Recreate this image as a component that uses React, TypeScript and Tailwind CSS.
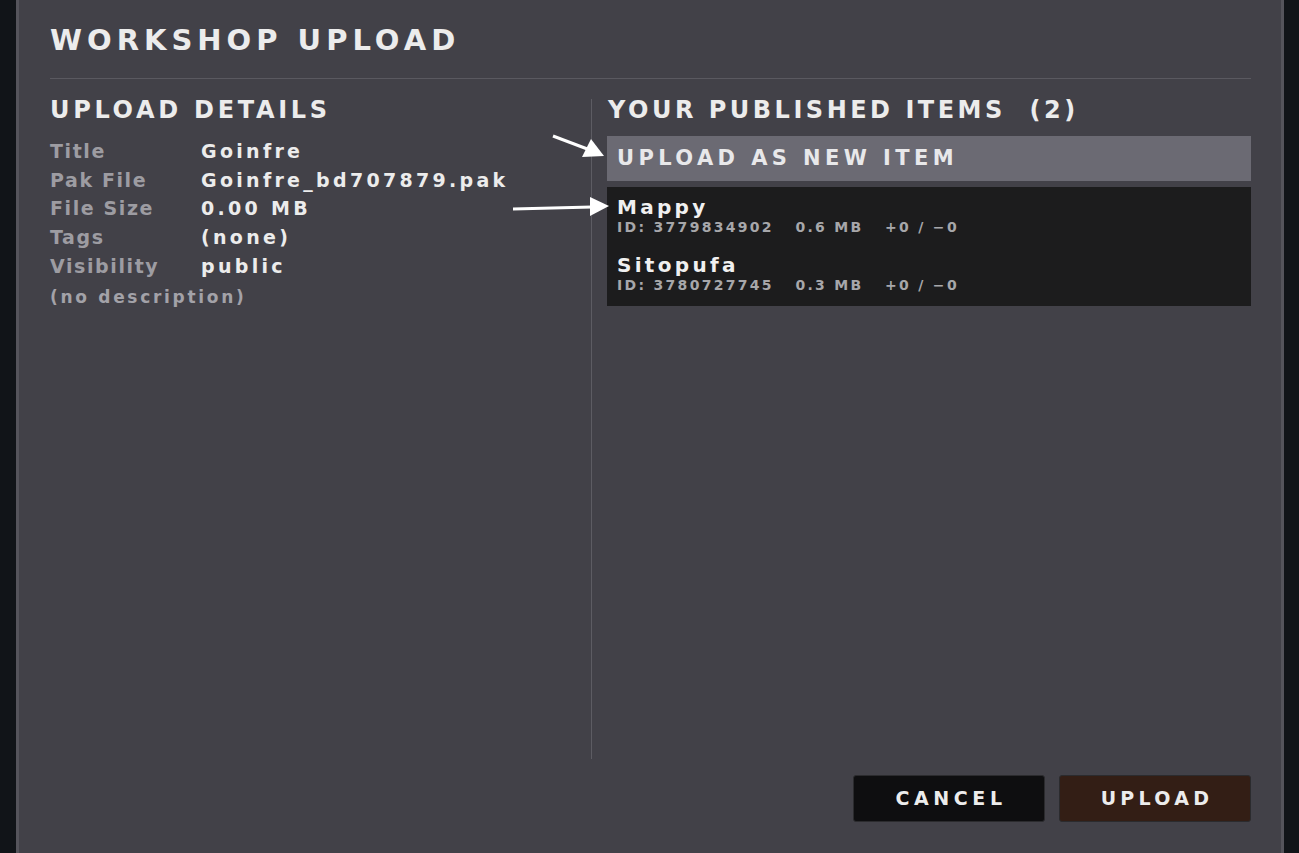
import React from "react";

const font = { fontFamily: '"DejaVu Sans", "Liberation Sans", sans-serif' };

const details: [string, string][] = [
  ["Title", "Goinfre"],
  ["Pak File", "Goinfre_bd707879.pak"],
  ["File Size", "0.00 MB"],
  ["Tags", "(none)"],
  ["Visibility", "public"],
];

const items = [
  { name: "Mappy", id: "3779834902", size: "0.6 MB" },
  { name: "Sitopufa", id: "3780727745", size: "0.3 MB" },
];

function Arrows() {
  // white annotation arrows drawn over the dialog
  return (
    <svg className="pointer-events-none absolute left-0 top-0" width="1299" height="853">
      <line x1="553" y1="136" x2="590" y2="150" stroke="#fff" strokeWidth="3" />
      <polygon points="604,156 582,157 591,139" fill="#fff" />
      <line x1="513" y1="209" x2="592" y2="207" stroke="#fff" strokeWidth="3" />
      <polygon points="609,206 590,197 590,216" fill="#fff" />
    </svg>
  );
}

export default function App() {
  return (
    <div className="relative flex h-[853px] w-full overflow-hidden bg-[#111418]" style={font}>
      <div className="ml-[16px] flex h-full w-[1268px] flex-col border-x-[3px] border-[#55545b] bg-[#424148] pl-[31px] pr-[30px]">
        <h1 className="pt-[25px] text-[29px] font-bold uppercase leading-[30px] tracking-[5px] text-[#ececec]">
          Workshop Upload
        </h1>
        <div className="mt-[23px] h-px bg-[#5a5960]" />

        <div className="mt-[20px] flex h-[660px]">
          <div className="w-[542px] border-r border-[#5d5c63]">
            <h2 className="text-[24px] font-bold uppercase leading-[22px] tracking-[3.7px] text-[#ececec]">
              Upload Details
            </h2>
            <div className="mt-[16px] flex flex-col">
              {details.map(([k, v]) => (
                <div key={k} className="flex h-[28.8px] items-center text-[19px] font-bold leading-none">
                  <span className="w-[151px] tracking-[1.6px] text-[#9d9ca2]">{k}</span>
                  <span className="tracking-[3.3px] text-[#ececec]">{v}</span>
                </div>
              ))}
              <div className="mt-[4px] text-[17px] font-bold leading-[24px] tracking-[2.7px] text-[#a3a2a8]">
                (no description)
              </div>
            </div>
          </div>

          <div className="flex-1 pl-[15px]">
            <h2 className="pl-[1px] text-[24px] font-bold uppercase leading-[22px] tracking-[3.5px] text-[#ececec]">
              Your Published Items&nbsp;&nbsp;(2)
            </h2>
            <div className="mt-[15px] flex h-[45px] items-center bg-[#6b6a73] px-[10px] text-[21px] font-bold uppercase tracking-[4.4px] text-[#e8e8ea]">
              Upload as new item
            </div>
            <div className="mt-[6px] flex flex-col gap-[18px] bg-[#1c1c1d] px-[10px] pb-[13px] pt-[8px]">
              {items.map((it) => (
                <div key={it.id} className="flex flex-col">
                  <span className="text-[20px] font-bold leading-[24px] tracking-[3.3px] text-[#f0f0f0]">{it.name}</span>
                  <span className="whitespace-pre text-[14px] font-bold leading-[16px] tracking-[2.3px] text-[#a7a7aa]">
                    {`ID: ${it.id}   ${it.size}   +0 / \u22120`}
                  </span>
                </div>
              ))}
            </div>
          </div>
        </div>

        <div className="mt-[16px] flex justify-end gap-[14px]">
          <button className="flex h-[47px] w-[192px] items-center justify-center rounded-[3px] border border-[#2b2b2e] bg-[#0e0e10] pl-[4px] text-[19px] font-bold uppercase tracking-[4.6px] text-[#ececec]">
            Cancel
          </button>
          <button className="flex h-[47px] w-[192px] items-center justify-center rounded-[3px] border border-[#2b2b2e] bg-[#331e15] pl-[4px] text-[19px] font-bold uppercase tracking-[4.3px] text-[#ececec]">
            Upload
          </button>
        </div>
      </div>
      <Arrows />
    </div>
  );
}
